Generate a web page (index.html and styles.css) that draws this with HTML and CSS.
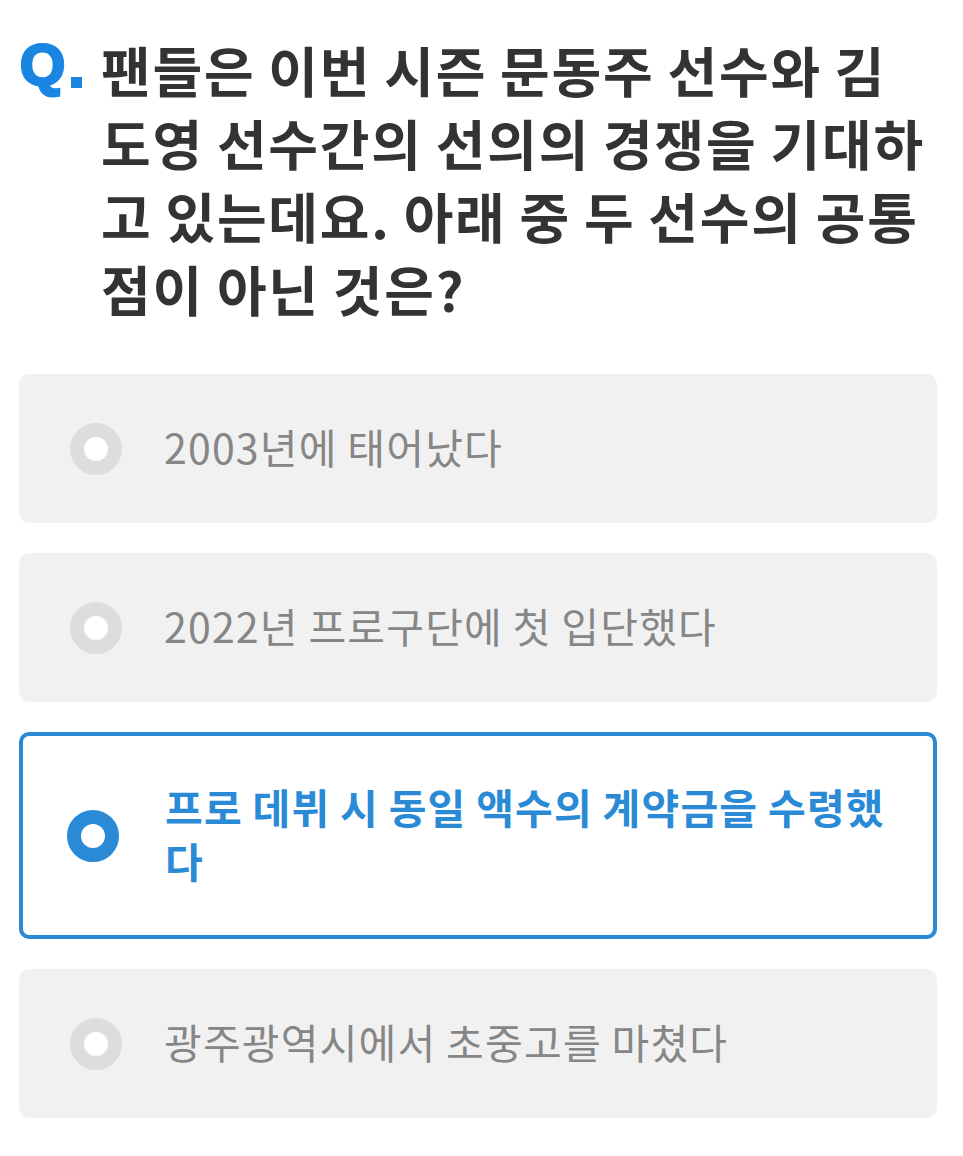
FILE: index.html
```html
<!DOCTYPE html>
<html lang="ko">
<head>
<meta charset="utf-8">
<link rel="stylesheet" href="styles.css">
</head>
<body>
<main class="quiz">
  <div class="question">
    <span class="q-mark">Q<span class="q-dot"></span></span>
    <p class="q-text">팬들은 이번 시즌 문동주 선수와 김<br>도영 선수간의 선의의 경쟁을 기대하<br>고 있는데요. 아래 중 두 선수의 공통<br>점이 아닌 것은?</p>
  </div>
  <ul class="options">
    <li class="option"><span class="radio"></span><span class="label">2003년에 태어났다</span></li>
    <li class="option"><span class="radio"></span><span class="label">2022년 프로구단에 첫 입단했다</span></li>
    <li class="option selected"><span class="radio"></span><span class="label">프로 데뷔 시 동일 액수의 계약금을 수령했다</span></li>
    <li class="option"><span class="radio"></span><span class="label">광주광역시에서 초중고를 마쳤다</span></li>
  </ul>
</main>
</body>
</html>
```

FILE: styles.css
```css
* { box-sizing: border-box; }
html, body { margin: 0; padding: 0; background: #ffffff; }
body {
  font-family: "Noto Sans CJK KR", "Noto Sans", sans-serif;
  width: 963px;
}
.quiz { padding: 33px 26px 0 19px; }
.question {
  display: flex;
  align-items: flex-start;
}
.q-mark {
  flex: 0 0 82px;
  display: flex;
  align-items: flex-start;
  font-family: "Liberation Sans", Arial, sans-serif;
  font-weight: 700;
  font-size: 58px;
  line-height: 1;
  padding-top: 3px;
  color: #1a86e2;
  -webkit-text-stroke: 3px #1a86e2;
  padding-left: 1px;
}
.q-dot {
  display: inline-block;
  width: 11px;
  height: 11px;
  background: #1a86e2;
  margin: 41px 0 0 6px;
}
.q-text {
  margin: 0;
  font-size: 54px;
  line-height: 73px;
  font-weight: 700;
  color: #333333;
  white-space: nowrap;
  letter-spacing: 1.8px;
  word-spacing: -4px;
}
.options {
  list-style: none;
  margin: 49px 0 0 0;
  padding: 0;
  display: flex;
  flex-direction: column;
  gap: 30px;
  width: 918px;
}
.option {
  display: flex;
  align-items: center;
  background: #f1f1f1;
  border-radius: 10px;
  padding: 44.5px 30px 44.5px 51px;
}
.radio {
  flex: 0 0 52px;
  width: 52px;
  height: 52px;
  border-radius: 50%;
  border: 14.5px solid #dddddd;
  background: #ffffff;
}
.label {
  margin-left: 42px;
  padding-bottom: 6px;
  font-size: 41px;
  line-height: 54px;
  color: #868686;
  letter-spacing: 1.2px;
  word-spacing: -3px;
}
.option.selected {
  background: #ffffff;
  border: 4px solid #2a8ad6;
  padding: 42.5px 30px 42.5px 44px;
}
.option.selected .radio {
  border-color: #2a8ad6;
}
.option.selected .label {
  color: #2a8ad6;
  font-weight: 700;
  margin-left: 46px;
}
```
